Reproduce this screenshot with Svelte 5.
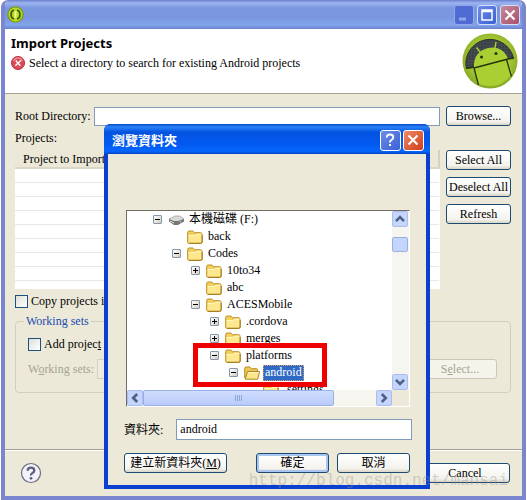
<script>
  let rootDir = $state('');
  let copyProjects = $state(false);
  let addToWorkingSets = $state(false);
  let folderName = $state('android');

  const emptyRows = [1, 2, 3, 4, 5, 6, 7, 8];

  // depth is the indent level, state is the expander box ('' for none)
  const tree = [
    { name: '本機磁碟 (F:)', depth: 0, state: 'open', icon: 'drive' },
    { name: 'back', depth: 1, state: '', icon: 'folder' },
    { name: 'Codes', depth: 1, state: 'open', icon: 'folder' },
    { name: '10to34', depth: 2, state: 'closed', icon: 'folder' },
    { name: 'abc', depth: 2, state: '', icon: 'folder' },
    { name: 'ACESMobile', depth: 2, state: 'open', icon: 'folder' },
    { name: '.cordova', depth: 3, state: 'closed', icon: 'folder' },
    { name: 'merges', depth: 3, state: 'closed', icon: 'folder' },
    { name: 'platforms', depth: 3, state: 'open', icon: 'folder' },
    { name: 'android', depth: 4, state: 'open', icon: 'open-folder' },
    { name: '.settings', depth: 5, state: '', icon: 'folder' }
  ];

  let selected = $state('android');

  function pick(node) {
    selected = node.name;
    folderName = node.name;
  }
</script>

{#snippet chevron(dir)}
  <svg class="chevron {dir}" viewBox="0 0 10 10" aria-hidden="true">
    <path d="M1 7.200 5 3.200 9 7.200" fill="none" stroke="#4d6185" stroke-width="2.600" />
  </svg>
{/snippet}

{#snippet nodeIcon(kind)}
  {#if kind === 'drive'}
    <svg class="node-icon" viewBox="0 0 16 16" aria-hidden="true">
      <path d="M1 7 7 4h5l4 3-6 4H6z" fill="#d9d9d9" stroke="#999" stroke-width=".7" />
      <path d="M1 7l5 2h4l6-2v2.5L10 13H6L1 9.5z" fill="#777" />
      <path d="M2 9l4 2" stroke="#ddd" />
      <circle cx="12.5" cy="9.7" r=".8" fill="#bcd2bc" />
    </svg>
  {:else if kind === 'folder'}
    <svg class="node-icon" viewBox="0 0 16 16" aria-hidden="true">
      <path d="M.7 13V3.5Q.7 2 2.2 2h3.6L7.500 3.700H13.500Q15 3.700 15 5.200V13Q15 14.300 13.700 14.300H2Q.7 14.300.7 13z" fill="#f3cf5c" stroke="#b98d25" />
      <path d="M1.500 7Q1.500 6 2.500 6H8l1.300-1.300H14.500V12.500Q14.500 13.700 13.300 13.700H1.500z" fill="#fde890" />
      <path d="M1.500 6.500H8.300L9.500 5.300H14" fill="none" stroke="#fff6c4" />
      <path d="M2 14.300H13.700Q15.200 14.300 15.200 13V6" fill="none" stroke="#a0771b" />
    </svg>
  {:else}
    <svg class="node-icon" viewBox="0 0 16 16" aria-hidden="true">
      <path d="M.7 13V3.500Q.7 2 2 2h3.800L7.500 3.700H12.500Q13.700 3.700 13.700 5V7" fill="#eec552" stroke="#b98d25" />
      <path d="M1.300 14.200 3.500 6.500H15.600L13.700 14.200z" fill="#fde78b" stroke="#b0862a" />
      <path d="M4.200 7.500H14.500" stroke="#fff8cf" />
    </svg>
  {/if}
{/snippet}

<div class="window">
  <header class="titlebar">
    <svg class="app-icon" viewBox="0 0 16 16" aria-hidden="true">
      <circle cx="8" cy="8" r="7.800" fill="#7e9c16" />
      <circle cx="8" cy="8" r="6.500" fill="#b5dc22" />
      <path d="M6.500 3.800Q3.800 4.500 3.800 8T6.500 12.200M9.500 3.800Q12.200 4.500 12.200 8T9.500 12.200" fill="none" stroke="#3f5405" stroke-width="1.500" />
      <path d="M8 5v6" stroke="#f3ff9c" stroke-width="1.800" />
    </svg>
    <div class="caption-buttons">
      <button class="cap dim" aria-label="Minimize">
        <svg viewBox="0 0 18 18"><path d="M4 13h7" stroke="#8fa5ee" stroke-width="3" /></svg>
      </button>
      <button class="cap" aria-label="Maximize">
        <svg viewBox="0 0 18 18"><path d="M4 4h10v10H4zM4 5.500h10" fill="none" stroke="#fff" stroke-width="1.500" /></svg>
      </button>
      <button class="cap close" aria-label="Close">
        <svg viewBox="0 0 18 18"><path d="M4.500 4.500l9 9M13.500 4.500l-9 9" stroke="#fff" stroke-width="2.200" /></svg>
      </button>
    </div>
  </header>

  <div class="banner">
    <div class="banner-text">
      <h1>Import Projects</h1>
      <p>
        <svg class="error-icon" viewBox="0 0 14 14" aria-hidden="true">
          <circle cx="7" cy="7" r="6.500" fill="#dc4a56" stroke="#b52c3c" />
          <path d="M2.500 5Q4 1.800 7 1.800T11.500 5" fill="none" stroke="#ef9299" stroke-width="1.200" />
          <path d="M4.800 4.500l4.500 5.200M9.800 4.500l-5.500 5.200" stroke="#fff" stroke-width="1.400" />
        </svg>
        Select a directory to search for existing Android projects
      </p>
    </div>
    <svg class="droid" viewBox="0 0 56 56" aria-hidden="true">
      <defs>
        <radialGradient id="lime" cx=".5" cy=".45" r=".55">
          <stop offset=".6" stop-color="#a9cb35" />
          <stop offset="1" stop-color="#86a826" />
        </radialGradient>
        <pattern id="mesh" width="3" height="3" patternUnits="userSpaceOnUse">
          <rect width="3" height="3" fill="#3b4045" />
          <path d="M0 0h3M0 0v3" stroke="#50575c" stroke-width=".8" />
        </pattern>
      </defs>
      <circle cx="28" cy="28" r="27.500" fill="url(#lime)" />
      <path d="M4.500 36A24 24 0 1 1 51.500 25L46 26 12 35z" fill="url(#mesh)" />
      <path d="M4.500 36A24 24 0 1 1 51.500 25" fill="none" stroke="#2b3228" />
      <path d="M12 35C11 24 17 17 26 15 35 13 43 17 46 26L50 40Q42 53 28 53 20 53 16 50z" fill="#a9cf33" />
      <path d="M18 19l-3.500-4.500M33 15l1-6" stroke="#a9cf33" stroke-width="1.500" />
      <path d="M12 35 46 26M12 35l4.500 17M44.500 26.500l5 17" fill="none" stroke="#26330a" stroke-width="1.300" />
      <path d="M5 35l7-1M46 26l6-1" stroke="#26330a" stroke-width="1.300" />
      <circle cx="19.500" cy="24" r="1.500" fill="#26330a" />
      <circle cx="34" cy="20.500" r="1.500" fill="#26330a" />
    </svg>
  </div>

  <main class="page">
    <div class="row root-row">
      <label for="root">Root Directory:</label>
      <input id="root" class="text" type="text" bind:value={rootDir} />
      <button class="btn side">Browse...</button>
    </div>

    <p class="projects-label">Projects:</p>

    <div class="projects">
      <div class="list">
        <table>
          <thead>
            <tr><th>Project to Import</th></tr>
          </thead>
          <tbody>
            {#each emptyRows as row (row)}
              <tr><td></td></tr>
            {/each}
          </tbody>
        </table>
      </div>
      <div class="side-buttons">
        <button class="btn side">Select All</button>
        <button class="btn side">Deselect All</button>
        <button class="btn side">Refresh</button>
      </div>
    </div>

    <label class="check">
      <input type="checkbox" bind:checked={copyProjects} />
      Copy projects into workspace
    </label>

    <fieldset>
      <legend>Working sets</legend>
      <label class="check">
        <input type="checkbox" bind:checked={addToWorkingSets} />
        <span>Add projec<u>t</u> to working sets</span>
      </label>
      <div class="sets">
        <label for="sets">W<u>o</u>rking sets:</label>
        <select id="sets" disabled><option></option></select>
        <button class="btn off" disabled>S<u>e</u>lect...</button>
      </div>
    </fieldset>
  </main>

  <footer>
    <button class="help" aria-label="Help">
      <svg viewBox="0 0 22 22">
        <circle cx="11" cy="11" r="9.500" fill="#f2f2f8" stroke="#6a6c85" stroke-width="1.200" />
        <path d="M7.700 8.700Q7.700 5.700 11 5.700T14.300 8.500Q14.300 10 12.500 11T11 13.500" fill="none" stroke="#5d5f80" stroke-width="2.300" />
        <circle cx="11" cy="16.300" r="1.400" fill="#5d5f80" />
      </svg>
    </button>
    <button class="btn cancel">Cancel</button>
  </footer>

  <div class="dialog" role="dialog" aria-labelledby="dlg-title">
    <header class="dialog-title">
      <h2 id="dlg-title">瀏覽資料夾</h2>
      <div class="caption-buttons">
        <button class="cap big" aria-label="Help">
          <svg viewBox="0 0 18 18">
            <path d="M5.700 6.500Q5.700 3.500 9 3.500T12.300 6.300Q12.300 8 10.500 9T9 11.500" fill="none" stroke="#fff" stroke-width="1.900" />
            <path d="M8 13h2v2H8z" fill="#fff" />
          </svg>
        </button>
        <button class="cap big red" aria-label="Close">
          <svg viewBox="0 0 18 18"><path d="M4.500 4.500l9 9M13.500 4.500l-9 9" stroke="#fff" stroke-width="2" /></svg>
        </button>
      </div>
    </header>

    <div class="dialog-body">
      <div class="tree-box">
        <ul class="tree">
          {#each tree as node (node.name)}
            <li class="depth{node.depth}">
              {#if node.state}
                <button class="expander" aria-label="Toggle {node.name}">
                  <svg viewBox="0 0 9 9">
                    <path d="M2 4.500h5" stroke="#000" />
                    {#if node.state === 'closed'}<path d="M4.500 2v5" stroke="#000" />{/if}
                  </svg>
                </button>
              {:else}
                <span class="expander none"></span>
              {/if}
              {@render nodeIcon(node.icon)}
              <button class="node" class:selected={selected === node.name} onclick={() => pick(node)}>{node.name}</button>
            </li>
          {/each}
        </ul>
        <div class="vbar">
          <button class="arrow" aria-label="Scroll up">{@render chevron('up')}</button>
          <span class="vthumb"></span>
          <button class="arrow" aria-label="Scroll down">{@render chevron('down')}</button>
        </div>
        <div class="hbar">
          <button class="arrow" aria-label="Scroll left">{@render chevron('left')}</button>
          <span class="hthumb"><i></i><i></i><i></i><i></i></span>
          <button class="arrow" aria-label="Scroll right">{@render chevron('right')}</button>
        </div>
        <div class="marker"></div>
      </div>

      <div class="row folder-row">
        <label for="folder">資料夾:</label>
        <input id="folder" class="text" type="text" bind:value={folderName} />
      </div>

      <div class="dialog-buttons">
        <button class="btn new">建立新資料夾(<u>M</u>)</button>
        <button class="btn ok">確定</button>
        <button class="btn no">取消</button>
      </div>
    </div>
  </div>

  <span class="watermark">http://blog.csdn.net/mansai</span>
</div>

<style>
  :global(body) {
    background: #fff;
  }

  .window {
    position: relative;
    display: flex;
    flex-direction: column;
    box-sizing: border-box;
    min-height: 100vh;
    margin: 0 1px;
    padding-bottom: 1px;
    border: 4px solid #7b86d0;
    border-top: 0;
    border-radius: 7px 7px 0 0;
    background: #ece9d8;
    overflow: hidden;
    font-family: 'Liberation Serif', 'Noto Sans CJK TC', serif;
    font-size: 12px;
    line-height: 14px;
    color: #000;
  }

  .window * {
    box-sizing: border-box;
  }

  button,
  input,
  select {
    font: inherit;
    color: inherit;
    margin: 0;
  }

  h1,
  h2,
  p,
  ul {
    margin: 0;
    padding: 0;
  }

  .titlebar {
    display: flex;
    align-items: center;
    justify-content: space-between;
    height: 29px;
    margin: 0 -4px;
    padding: 0 6px;
    background: linear-gradient(#6a80cc, #9db4f0 3px, #7a96df 8px, #7b97e0 18px, #82a4ea 25px, #6c83cf);
  }

  .app-icon {
    width: 17px;
    height: 17px;
  }

  .caption-buttons {
    display: flex;
    gap: 3px;
  }

  .cap {
    width: 20px;
    height: 20px;
    padding: 0;
    border: 1px solid #d7e1fa;
    border-radius: 3px;
    background: linear-gradient(135deg, #6c8ce8, #3a62d4);
  }

  .cap svg {
    display: block;
    width: 18px;
    height: 18px;
  }

  .cap.dim {
    border-color: #91a7ea;
    background: #4f6bd3;
  }

  .cap.close {
    background: linear-gradient(135deg, #c68a9c, #a8506c);
  }

  .cap.big {
    width: 21px;
    height: 21px;
    border-color: #fff;
  }

  .cap.red {
    background: linear-gradient(135deg, #ee8a68, #cf3d1a);
  }

  .banner {
    display: flex;
    justify-content: space-between;
    height: 65px;
    padding: 4px 4px 0 6px;
    border-bottom: 1px solid #a3a194;
    background: #fff;
  }

  h1 {
    padding: 3px 0 5px;
    font: bold 13px/14px 'Noto Sans', sans-serif;
  }

  .banner p {
    display: flex;
    align-items: center;
    gap: 4px;
    padding-top: 1px;
  }

  .error-icon {
    width: 14px;
    height: 14px;
  }

  .droid {
    width: 56px;
    height: 56px;
  }

  .page {
    padding: 12px 11px 0 10px;
  }

  .row {
    display: flex;
    align-items: center;
    gap: 6px;
  }

  .root-row {
    gap: 3px;
  }

  .root-row .side {
    margin-left: 3px;
  }

  .text {
    flex: 1;
    min-width: 0;
    height: 19px;
    padding: 0 4px;
    border: 1px solid #7f9db9;
    background: #fff;
  }

  .btn {
    height: 20px;
    padding: 0;
    border: 1px solid #1c4a70;
    border-radius: 3px;
    background: linear-gradient(#fff, #f4f3ee 80%, #d9d4c6);
    text-align: center;
    white-space: nowrap;
  }

  .side {
    width: 65px;
  }

  .projects-label {
    padding: 5px 0;
  }

  .projects {
    display: flex;
    gap: 6px;
  }

  .list {
    flex: 1;
    height: 139px;
    background: #fff;
    overflow: hidden;
  }

  table {
    width: 100%;
    border-collapse: collapse;
  }

  th {
    height: 18px;
    padding: 0 8px;
    border-right: 2px solid #d5d2c0;
    border-bottom: 2px solid #dad7c7;
    background: #ebe8d8;
    font-weight: normal;
    text-align: left;
  }

  td {
    height: 14px;
    padding: 0;
    border-bottom: 1px solid #e8e8e8;
  }

  .side-buttons {
    display: flex;
    flex-direction: column;
    gap: 7px;
  }

  .check {
    display: flex;
    align-items: center;
    gap: 3px;
    white-space: nowrap;
  }

  .projects + .check {
    padding-top: 5px;
  }

  .check input {
    appearance: none;
    width: 13px;
    height: 13px;
    border: 1px solid #1c5180;
    background: linear-gradient(135deg, #dfdfd8, #fff);
  }

  .check input:checked {
    background: #21a121;
  }

  fieldset {
    margin: 6px 0 0;
    padding: 9px 13px 13px 12px;
    border: 1px solid #d0cfbc;
    border-radius: 4px;
    min-width: 0;
  }

  legend {
    margin-left: -4px;
    padding: 0 2px;
    color: #1a4ab0;
  }

  .sets {
    display: flex;
    align-items: center;
    gap: 3px;
    padding-top: 8px;
    color: #a5a492;
  }

  .sets select {
    flex: 1;
    min-width: 0;
    height: 20px;
    border: 1px solid #c9c7ba;
    background: #f0eee2;
    appearance: none;
  }

  .off {
    width: 74px;
    border-color: #cbc8b8;
    background: #f5f4ea;
    color: #a5a492;
  }

  footer {
    display: flex;
    flex: 1;
    align-items: center;
    justify-content: space-between;
    margin-top: 56px;
    padding: 0 12px 0 15px;
    border-top: 1px solid #a3a194;
    box-shadow: inset 0 1px #fff;
  }

  .help {
    width: 22px;
    height: 22px;
    padding: 0;
    border: 0;
    background: none;
  }

  .help svg {
    display: block;
  }

  .cancel {
    width: 90px;
  }

  /* folder picker floating over the wizard */
  .dialog {
    position: absolute;
    top: 124px;
    left: 99px;
    right: 92px;
    border: 4px solid #0a3fd0;
    border-top: 0;
    border-radius: 7px 7px 0 0;
    background: #ece9d8;
  }

  .dialog-title {
    display: flex;
    align-items: center;
    justify-content: space-between;
    height: 30px;
    margin: 0 -4px;
    padding: 2px 6px 0 8px;
    border-radius: 6px 6px 0 0;
    background: linear-gradient(#0a49c8, #2b83f8 3px, #0453e0 8px, #0259f0 20px, #0366fd 27px, #0246c6);
  }

  .dialog-title .caption-buttons {
    gap: 2px;
  }

  h2 {
    font: bold 13px/16px 'Noto Sans CJK TC', sans-serif;
    color: #fff;
  }

  .dialog-body {
    padding: 56px 14px 12px 16px;
  }

  .tree-box {
    position: relative;
    display: grid;
    grid-template: 179px 16px / 1fr 17px;
    margin: 0 2px;
    border: 1px solid #fff;
    border-top-color: #716f64;
    border-left-color: #716f64;
    background: #ece9d8;
  }

  .tree {
    list-style: none;
    overflow: hidden;
    background: #fff;
  }

  .tree li {
    display: flex;
    align-items: center;
    height: 17px;
    padding-left: 26px;
  }

  .tree .depth1 {
    padding-left: 45px;
  }

  .tree .depth2 {
    padding-left: 64px;
  }

  .tree .depth3 {
    padding-left: 83px;
  }

  .tree .depth4 {
    padding-left: 102px;
  }

  .tree .depth5 {
    padding-left: 121px;
  }

  .expander {
    flex: none;
    width: 9px;
    height: 9px;
    margin-right: 6px;
    padding: 0;
    border: 1px solid #8497ab;
    border-radius: 1px;
    background: linear-gradient(135deg, #fff, #d3cfc1);
  }

  .expander svg {
    display: block;
    width: 9px;
    height: 9px;
    margin: -1px;
  }

  .expander.none {
    border: 0;
    background: none;
  }

  .node-icon {
    flex: none;
    width: 16px;
    height: 16px;
  }

  .node {
    height: 16px;
    margin-left: 3px;
    padding: 0 2px 2px;
    border: 0;
    background: none;
    line-height: 14px;
    white-space: nowrap;
  }

  .selected {
    outline: 1px dotted #d8a060;
    outline-offset: -1px;
    background: #316ac5;
    color: #fff;
  }

  .vbar {
    display: flex;
    flex-direction: column;
    background: #f6f5f0;
  }

  .hbar {
    display: flex;
    background: #f6f5f0;
  }

  .arrow {
    flex: none;
    display: flex;
    align-items: center;
    justify-content: center;
    width: 16px;
    height: 16px;
    padding: 0;
    border: 1px solid #a9bdf0;
    border-radius: 2px;
    background: #c6d5fd;
  }

  .vbar .arrow:last-child {
    margin-top: auto;
  }

  .hbar .arrow:last-child {
    margin-left: auto;
  }

  .chevron {
    width: 10px;
    height: 10px;
  }

  .down {
    transform: rotate(180deg);
  }

  .left {
    transform: rotate(-90deg);
  }

  .right {
    transform: rotate(90deg);
  }

  .vthumb {
    width: 16px;
    height: 15px;
    margin-top: 10px;
    border: 1px solid #98b1e4;
    border-radius: 2px;
    background: #c6d5fd;
  }

  .hthumb {
    display: flex;
    align-items: center;
    justify-content: center;
    gap: 1px;
    width: 72%;
    border: 1px solid #98b1e4;
    border-radius: 2px;
    background: linear-gradient(#d0ddff, #b9cbfa);
  }

  .hthumb i {
    width: 1px;
    height: 6px;
    background: #8ba5dd;
  }

  /* red frame round the platforms/android rows */
  .marker {
    position: absolute;
    top: 132px;
    left: 66px;
    width: 134px;
    height: 44px;
    border: 5px solid #ee0000;
    pointer-events: none;
  }

  .folder-row {
    gap: 13px;
    padding-top: 12px;
  }

  .folder-row .text {
    height: 21px;
    padding: 0 3px;
  }

  .dialog-buttons {
    display: flex;
    gap: 8px;
    padding: 13px 2px 0 0;
  }

  .new {
    width: 103px;
    margin-right: auto;
  }

  .ok,
  .no {
    width: 73px;
  }

  .ok {
    box-shadow: inset 0 0 0 2px #a9c5f2;
  }

  .watermark {
    position: absolute;
    right: 14px;
    bottom: 6px;
    font: 16px/18px 'Liberation Mono', monospace;
    color: rgba(150, 150, 150, 0.4);
    pointer-events: none;
  }
</style>
